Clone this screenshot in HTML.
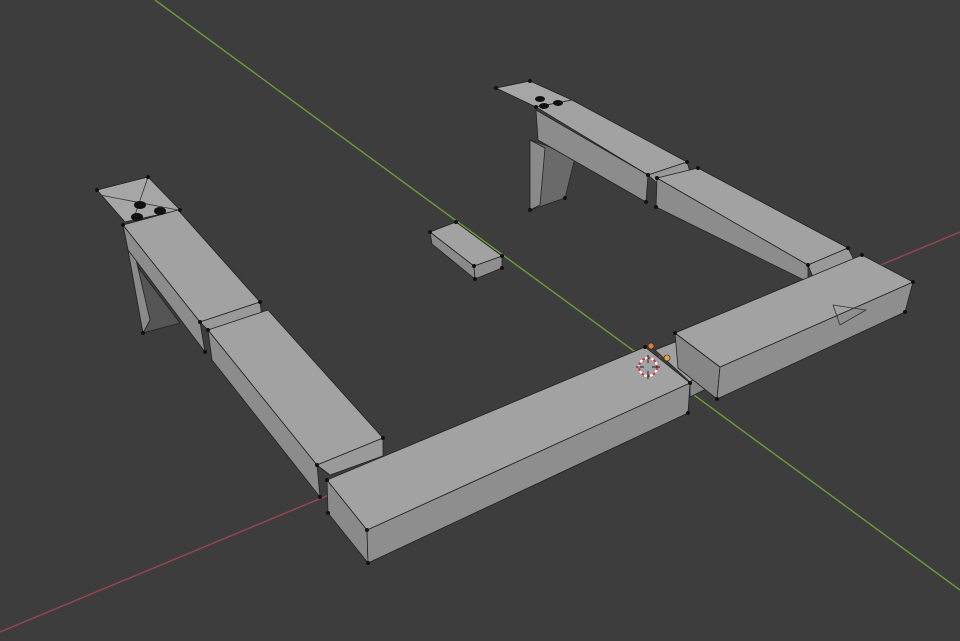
<!DOCTYPE html>
<html><head><style>html,body{margin:0;padding:0;background:#3d3d3d;overflow:hidden}svg{display:block}</style></head>
<body>
<svg width="960" height="641" viewBox="0 0 960 641" xmlns="http://www.w3.org/2000/svg">
<rect width="960" height="641" fill="#3d3d3d"/>
<line x1="155" y1="0" x2="960" y2="590" stroke="#6f9a3c" stroke-width="1.4"/>
<line x1="0" y1="632" x2="960" y2="232" stroke="#9a4650" stroke-width="1.4"/>
<g stroke="#222" stroke-width="0.8" stroke-linejoin="round">
<polygon points="530,140 545,145 575,158 565,198 530,210" fill="#6a6a6a"/>
<polygon points="530,140 545,148 540,205 530,210" fill="#8a8a8a"/>
<polygon points="496,88 530,81 572,100 536,107" fill="#a6a6a6"/>
<polygon points="536,110 648,175 646,202 538,140" fill="#8c8c8c"/>
<polygon points="536,107 572,100 687,162 648,175" fill="#a2a2a2"/>
<polygon points="648,175 687,162 690,172 656,182" fill="#999"/>
<polygon points="657,178 808,265 808,282 656,207" fill="#8c8c8c"/>
<polygon points="657,178 698,168 848,248 808,265" fill="#a2a2a2"/>
<polygon points="808,265 848,248 855,262 815,282" fill="#9a9a9a"/>
<!-- connector (behind right box) -->
<polygon points="655,350 700,332 712,365 690,382" fill="#a0a0a0"/>
<polygon points="690,382 712,365 710,387 690,397" fill="#858585"/>
<!-- right box -->
<polygon points="675,333 720,367 717,399 678,368" fill="#868686"/>
<polygon points="720,367 913,282 905,312 717,399" fill="#8e8e8e"/>
<polygon points="675,333 862,255 913,282 720,367" fill="#a2a2a2"/>
<polygon points="833,305 866,310 840,325" fill="none" stroke="#333"/>
<!-- front box -->
<polygon points="327,480 367,530 368,563 328,513" fill="#8a8a8a"/>
<polygon points="367,530 690,383 688,413 368,563" fill="#8e8e8e"/>
<polygon points="327,480 645,347 690,383 367,530" fill="#a2a2a2"/>
<polygon points="128,250 143,333 180,323 140,270" fill="#555"/>
<polygon points="128,250 143,333 150,320 135,255" fill="#8a8a8a"/>
<polygon points="97,190 148,177 180,210 125,222" fill="#a6a6a6"/>
<line x1="100" y1="195" x2="178" y2="210" stroke="#333"/>
<line x1="148" y1="177" x2="135" y2="215" stroke="#333"/>
<polygon points="123,225 200,322 205,352 128,250" fill="#8c8c8c"/>
<polygon points="123,225 178,210 260,302 200,322" fill="#a2a2a2"/>
<polygon points="200,322 260,302 262,318 210,332" fill="#9a9a9a"/>
<polygon points="208,330 317,465 320,497 212,360" fill="#8c8c8c"/>
<polygon points="208,330 268,310 383,438 317,465" fill="#a2a2a2"/>
<polygon points="317,465 383,438 383,456 330,475" fill="#9a9a9a"/>
<polygon points="430,232 474,266 475,279 432,244" fill="#8a8a8a"/>
<polygon points="474,266 502,256 502,268 475,279" fill="#8e8e8e"/>
<polygon points="430,232 456,222 502,256 474,266" fill="#a2a2a2"/>
</g>
<g fill="#111">
<ellipse cx="140" cy="205" rx="6" ry="4"/><ellipse cx="160" cy="211" rx="6" ry="4"/><ellipse cx="137" cy="217" rx="6" ry="4"/>
<ellipse cx="540" cy="99" rx="5" ry="3"/><ellipse cx="558" cy="103" rx="5" ry="3"/><ellipse cx="544" cy="106" rx="5" ry="3"/>
<circle cx="367" cy="530" r="2"/><circle cx="368" cy="563" r="2"/><circle cx="690" cy="383" r="2"/><circle cx="688" cy="413" r="2"/><circle cx="327" cy="480" r="2"/><circle cx="328" cy="513" r="2"/><circle cx="645" cy="347" r="2"/>
<circle cx="913" cy="282" r="2"/><circle cx="905" cy="312" r="2"/><circle cx="862" cy="255" r="2"/><circle cx="717" cy="399" r="2"/><circle cx="675" cy="333" r="2"/>
<circle cx="123" cy="225" r="2"/><circle cx="200" cy="322" r="2"/><circle cx="205" cy="352" r="2"/><circle cx="260" cy="302" r="2"/><circle cx="143" cy="333" r="2"/><circle cx="97" cy="190" r="2"/><circle cx="148" cy="177" r="2"/><circle cx="180" cy="210" r="2"/>
<circle cx="208" cy="330" r="2"/><circle cx="317" cy="465" r="2"/><circle cx="320" cy="497" r="2"/><circle cx="383" cy="438" r="2"/>
<circle cx="430" cy="232" r="2"/><circle cx="456" cy="222" r="2"/><circle cx="502" cy="256" r="2"/><circle cx="474" cy="266" r="2"/><circle cx="475" cy="279" r="2"/><circle cx="502" cy="268" r="2"/>
<circle cx="496" cy="88" r="2"/><circle cx="530" cy="81" r="2"/><circle cx="536" cy="107" r="2"/><circle cx="648" cy="175" r="2"/><circle cx="687" cy="162" r="2"/><circle cx="646" cy="202" r="2"/><circle cx="530" cy="210" r="2"/><circle cx="565" cy="198" r="2"/>
<circle cx="657" cy="178" r="2"/><circle cx="698" cy="168" r="2"/><circle cx="848" cy="248" r="2"/><circle cx="808" cy="265" r="2"/><circle cx="656" cy="207" r="2"/>
</g>
<circle cx="648" cy="367" r="9" fill="none" stroke="#d33" stroke-width="2" stroke-dasharray="3 3"/>
<circle cx="648" cy="367" r="9" fill="none" stroke="#fff" stroke-width="2" stroke-dasharray="3 3" stroke-dashoffset="3"/>
<line x1="636" y1="367" x2="644" y2="367" stroke="#222"/><line x1="652" y1="367" x2="660" y2="367" stroke="#222"/>
<line x1="648" y1="355" x2="648" y2="363" stroke="#222"/><line x1="648" y1="371" x2="648" y2="379" stroke="#222"/>
<circle cx="651" cy="346" r="3" fill="#e07a30" stroke="#222" stroke-width="0.6"/>
<circle cx="667" cy="358" r="3" fill="#e8a040" stroke="#222" stroke-width="0.6"/>
</svg>
</body></html>
